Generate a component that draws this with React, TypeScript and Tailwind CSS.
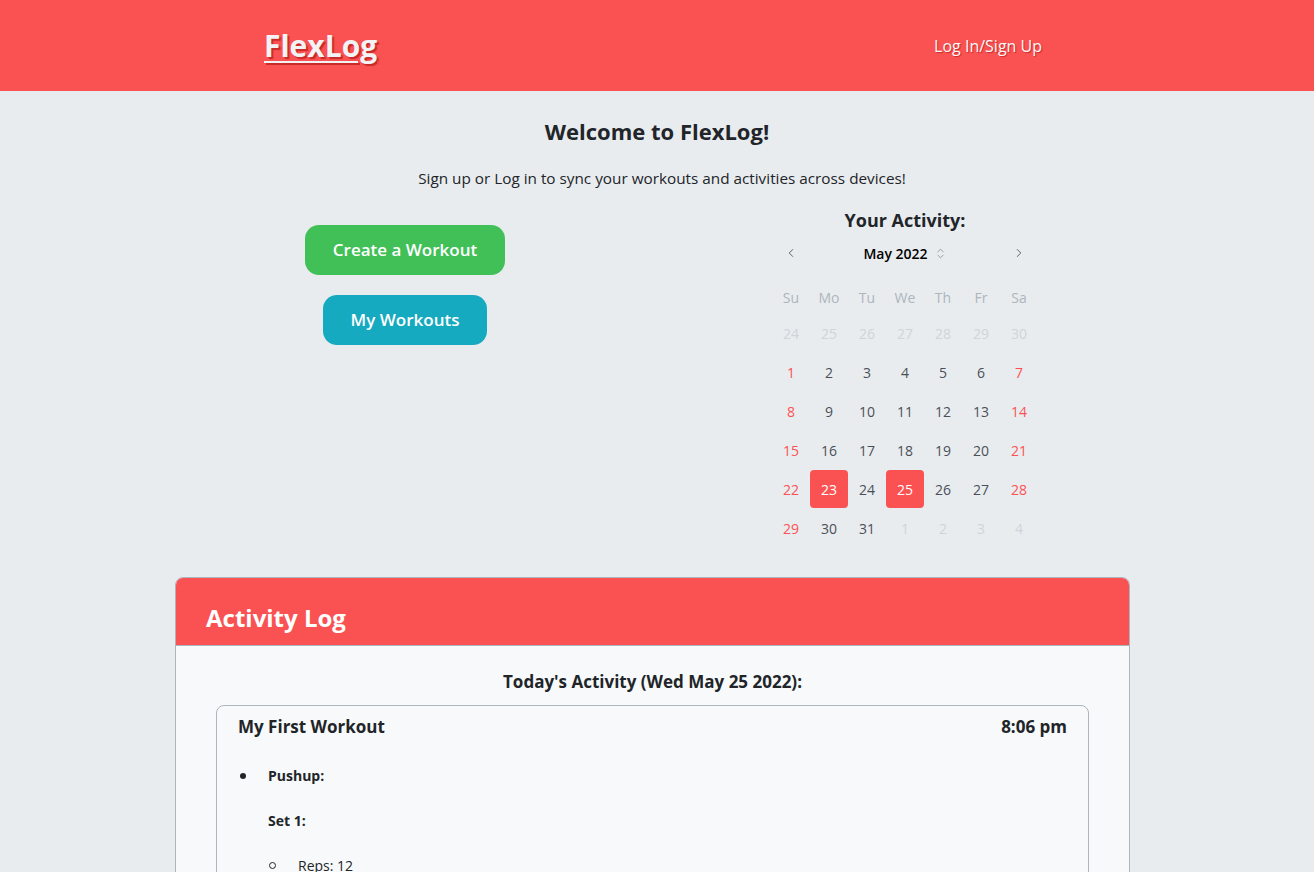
import { ChevronLeft, ChevronRight, ChevronsUpDown } from 'lucide-react';

const weekDays = ['Su', 'Mo', 'Tu', 'We', 'Th', 'Fr', 'Sa'];

type Day = { n: number; outside?: boolean; active?: boolean };

const weeks: Day[][] = [
    [24, 25, 26, 27, 28, 29, 30].map(n => ({ n, outside: true })),
    [1, 2, 3, 4, 5, 6, 7].map(n => ({ n })),
    [8, 9, 10, 11, 12, 13, 14].map(n => ({ n })),
    [15, 16, 17, 18, 19, 20, 21].map(n => ({ n })),
    [22, 23, 24, 25, 26, 27, 28].map(n => ({ n, active: n === 23 || n === 25 })),
    [{ n: 29 }, { n: 30 }, { n: 31 }, { n: 1, outside: true }, { n: 2, outside: true }, { n: 3, outside: true }, { n: 4, outside: true }],
];

function Calendar() {
    return (
        <div className="w-[266px] mt-[1px]">
            <div className="flex items-center justify-between h-[36px] mb-[11px]">
                <button className="w-[38px] h-[36px] flex items-center justify-center text-[#495057]">
                    <ChevronLeft className="w-[14px] h-[14px]" strokeWidth={1.5} />
                </button>
                <div className="flex items-center gap-[6px] text-[14px] font-semibold text-[#000]">
                    May 2022
                    <ChevronsUpDown className="w-[13px] h-[13px] text-[#868e96]" strokeWidth={1.5} />
                </div>
                <button className="w-[38px] h-[36px] flex items-center justify-center text-[#495057]">
                    <ChevronRight className="w-[14px] h-[14px]" strokeWidth={1.5} />
                </button>
            </div>
            <div className="grid grid-cols-7">
                {weekDays.map(d => (
                    <div key={d} className="h-[30px] flex items-center justify-center text-[14px] text-[#adb5bd]">{d}</div>
                ))}
            </div>
            <div className="flex flex-col gap-[1px] mt-[2px]">
                {weeks.map((w, i) => (
                    <div key={i} className="grid grid-cols-7">
                        {w.map((d, j) => {
                            const weekend = j === 0 || j === 6;
                            let cls = 'text-[#495057]';
                            if (d.outside) cls = 'text-[#ced4da]';
                            else if (d.active) cls = 'bg-[#fa5252] text-white rounded-[4px]';
                            else if (weekend) cls = 'text-[#fa5252]';
                            return (
                                <div key={j} className={`h-[38px] flex items-center justify-center text-[14px] ${cls}`}>{d.n}</div>
                            );
                        })}
                    </div>
                ))}
            </div>
        </div>
    );
}

export default function App() {
    return (
        <div className="min-h-[872px] bg-[#e9ecef] font-['Open_Sans',sans-serif] text-[#212529]">
            <header className="h-[91px] bg-[#fa5252] flex items-center">
                <div className="w-[1000px] mx-auto flex items-center justify-between pl-[107px] pr-[115px]">
                    <a className="text-[30px] font-bold text-[#f1f3f5] underline underline-offset-[4px] decoration-[2px] [text-shadow:2px_2px_1px_#c92a2a]">FlexLog</a>
                    <a className="text-[16px] text-[#f8f9fa] [text-shadow:1px_1px_1px_#c92a2a]">Log In/Sign Up</a>
                </div>
            </header>

            <div className="text-center pt-[24px]">
                <h1 className="text-[22px] font-bold leading-[32px]">Welcome to FlexLog!</h1>
                <p className="text-[15.3px] mt-[19px] leading-[24px] pl-[10px]">Sign up or Log in to sync your workouts and activities across devices!</p>
            </div>

            <div className="w-[1000px] ml-[155px] grid grid-cols-2 mt-[16px]">
                <div className="flex flex-col items-center gap-[20px] pt-[19px]">
                    <button className="bg-[#40c057] text-white font-semibold text-[17px] h-[50px] px-[28px] rounded-[14px]">Create a Workout</button>
                    <button className="bg-[#15aabf] text-white font-semibold text-[17px] h-[50px] px-[28px] rounded-[14px]">My Workouts</button>
                </div>
                <div className="flex flex-col items-center">
                    <h2 className="text-[18px] font-bold leading-[28px]">Your Activity:</h2>
                    <Calendar />
                </div>
            </div>

            <div className="w-[955px] ml-[175px] mt-[30px] rounded-[8px] border border-[#adb5bd] overflow-hidden bg-[#f8f9fa]">
                <div className="bg-[#fa5252] h-[68px] flex items-end pb-[9px] pl-[30px] border-b border-[#adb5bd]">
                    <h2 className="text-[24px] font-bold text-white">Activity Log</h2>
                </div>
                <div className="px-[40px] pt-[21px] pb-[40px]">
                    <h3 className="text-center text-[17px] font-bold leading-[30px]">Today's Activity (Wed May 25 2022):</h3>
                    <div className="mt-[8px] border border-[#adb5bd] rounded-[8px] px-[21px] pt-[8px] pb-[20px]">
                        <div className="flex justify-between items-center">
                            <span className="text-[17px] font-bold">My First Workout</span>
                            <span className="text-[17px] font-bold">8:06 pm</span>
                        </div>
                        <ul className="mt-[25px] text-[14px]">
                            <li className="flex">
                                <span className="w-[30px] shrink-0 flex justify-center pt-[8px] pr-[20px]">
                                    <span className="w-[6px] h-[6px] shrink-0 rounded-full bg-[#212529]" />
                                </span>
                                <div className="flex-1">
                                    <p className="font-bold">Pushup:</p>
                                    <p className="mt-[24px] font-bold">Set 1:</p>
                                    <ul className="mt-[24px]">
                                        <li className="flex">
                                            <span className="w-[30px] shrink-0 flex justify-center pt-[7px] pr-[22px]">
                                                <span className="w-[7px] h-[7px] shrink-0 rounded-full border border-[#212529]" />
                                            </span>
                                            <span>Reps: 12</span>
                                        </li>
                                        <li className="flex mt-[20px]">
                                            <span className="w-[30px] shrink-0 flex justify-center pt-[7px] pr-[22px]">
                                                <span className="w-[7px] h-[7px] shrink-0 rounded-full border border-[#212529]" />
                                            </span>
                                            <span>Weight: 0</span>
                                        </li>
                                    </ul>
                                </div>
                            </li>
                        </ul>
                    </div>
                </div>
            </div>
        </div>
    );
}
